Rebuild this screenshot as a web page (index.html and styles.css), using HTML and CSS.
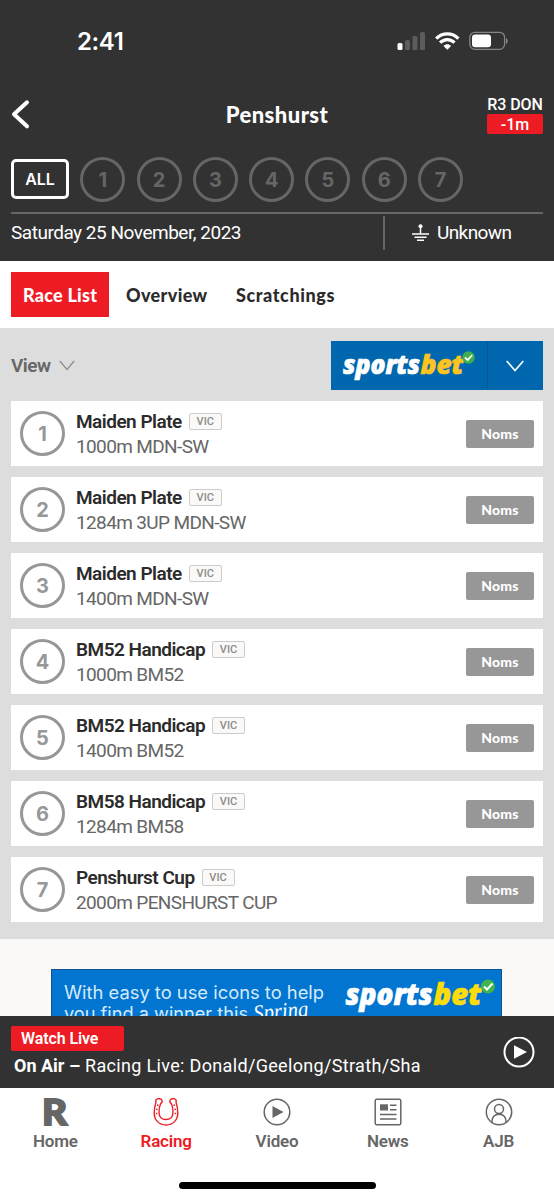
FILE: index.html
```
<!DOCTYPE html>
<html lang="en">
<head>
    <meta charset="UTF-8">
    <meta name="viewport" content="width=device-width, initial-scale=1.0">
    <title>Penshurst - Race List</title>
    <link rel="stylesheet" href="styles.css">
</head>
<body>

    <!-- Header Section -->
    <div class="header">
        <div class="status-bar">
            <span class="time">2:41</span>
            <svg class="status-icons" width="112" height="20" viewBox="0 0 112 20">
                <rect x="0.5" y="12" width="5" height="7" rx="1.5" fill="#fff"/>
                <rect x="8" y="9" width="5" height="10" rx="1.5" fill="#5c5c5c"/>
                <rect x="15.5" y="5" width="5" height="14" rx="1.5" fill="#5c5c5c"/>
                <rect x="23" y="1" width="5" height="18" rx="1.5" fill="#5c5c5c"/>
                <g fill="none" stroke="#fff" stroke-width="3.2">
                    <path d="M39.2 7.6C45.3 1.2 55.3 1.2 61.4 7.6"/>
                    <path d="M43.1 11.7C47.2 7.5 53.4 7.5 57.5 11.7"/>
                </g>
                <path d="M46.5 15C48.7 12.8 51.9 12.8 54.1 15L50.3 18.8Z" fill="#fff"/>
                <rect x="72.8" y="1.3" width="34.8" height="17" rx="5" fill="none" stroke="#858585" stroke-width="1.3"/>
                <rect x="75" y="3.5" width="19" height="12.8" rx="3.2" fill="#fff"/>
                <path d="M109 7c2.2 1 2.2 5 0 6z" fill="#858585"/>
            </svg>
        </div>

        <div class="title-bar">
            <svg class="back" width="20" height="32" viewBox="0 0 20 32">
                <path d="M16 3.3L3 15.3L16 27.3" fill="none" stroke="#fff" stroke-width="4" stroke-linecap="round" stroke-linejoin="round"/>
            </svg>
            <h1>Penshurst</h1>
            <div class="next-race">
                <span class="next-name">R3 DON</span>
                <span class="next-time">-1m</span>
            </div>
        </div>

        <div class="race-numbers">
            <span class="all">ALL</span>
            <span class="circle">1</span>
            <span class="circle">2</span>
            <span class="circle">3</span>
            <span class="circle">4</span>
            <span class="circle">5</span>
            <span class="circle">6</span>
            <span class="circle">7</span>
        </div>

        <div class="meeting-info">
            <span class="date">Saturday 25 November, 2023</span>
            <div class="track">
                <svg width="17" height="18" viewBox="0 0 17 18">
                    <circle cx="8.5" cy="2.2" r="2" fill="#fff"/>
                    <path d="M8.5 2v8M0 10h17M2.5 13.2h12M5 16.2h7" fill="none" stroke="#fff" stroke-width="1.5"/>
                </svg>
                <span>Unknown</span>
            </div>
        </div>
    </div>

    <!-- Tabs Section -->
    <div class="tabs">
        <span class="tab active">Race List</span>
        <span class="tab overview">Overview</span>
        <span class="tab">Scratchings</span>
    </div>

    <!-- Race List Section -->
    <div class="race-list">
        <div class="list-top">
            <div class="view">
                <span>View</span>
                <svg width="16" height="11" viewBox="0 0 16 11">
                    <path d="M0.8 1L8 9.5L15.2 1" fill="none" stroke="#8c8c8c" stroke-width="1.2"/>
                </svg>
            </div>
            <div class="bookie">
                <svg class="bookie-logo" width="156" height="49" viewBox="0 0 156 49">
                    <g class="logo-text" font-size="27">
                        <text x="12" y="33" textLength="77" lengthAdjust="spacingAndGlyphs" fill="#fff" stroke="#fff">sports</text>
                        <text x="89.500" y="33" textLength="43" lengthAdjust="spacingAndGlyphs" fill="#fdc41f" stroke="#fdc41f">bet</text>
                    </g>
                    <circle cx="137.5" cy="16.5" r="6.2" fill="#3fb04b"/>
                    <path d="M134 16.5l2.7 2.5 4.5-5" fill="none" stroke="#fff" stroke-width="1.8"/>
                </svg>
                <div class="bookie-arrow">
                    <svg width="18" height="12" viewBox="0 0 18 12">
                        <path d="M0.7 1L9 10.5L17.3 1" fill="none" stroke="#fff" stroke-width="1.6"/>
                    </svg>
                </div>
            </div>
        </div>

        <div class="race">
            <span class="circle">1</span>
            <div class="race-info">
                <h2>Maiden Plate <span class="state">VIC</span></h2>
                <p>1000m MDN-SW</p>
            </div>
            <span class="noms">Noms</span>
        </div>
        <div class="race">
            <span class="circle">2</span>
            <div class="race-info">
                <h2>Maiden Plate <span class="state">VIC</span></h2>
                <p>1284m 3UP MDN-SW</p>
            </div>
            <span class="noms">Noms</span>
        </div>
        <div class="race">
            <span class="circle">3</span>
            <div class="race-info">
                <h2>Maiden Plate <span class="state">VIC</span></h2>
                <p>1400m MDN-SW</p>
            </div>
            <span class="noms">Noms</span>
        </div>
        <div class="race">
            <span class="circle">4</span>
            <div class="race-info">
                <h2>BM52 Handicap <span class="state">VIC</span></h2>
                <p>1000m BM52</p>
            </div>
            <span class="noms">Noms</span>
        </div>
        <div class="race">
            <span class="circle">5</span>
            <div class="race-info">
                <h2>BM52 Handicap <span class="state">VIC</span></h2>
                <p>1400m BM52</p>
            </div>
            <span class="noms">Noms</span>
        </div>
        <div class="race">
            <span class="circle">6</span>
            <div class="race-info">
                <h2>BM58 Handicap <span class="state">VIC</span></h2>
                <p>1284m BM58</p>
            </div>
            <span class="noms">Noms</span>
        </div>
        <div class="race">
            <span class="circle">7</span>
            <div class="race-info">
                <h2>Penshurst Cup <span class="state">VIC</span></h2>
                <p>2000m PENSHURST CUP</p>
            </div>
            <span class="noms">Noms</span>
        </div>
    </div>

    <!-- Advert Section -->
    <div class="advert">
        <svg class="banner" width="451" height="47" viewBox="0 0 451 47">
            <g class="banner-text" font-size="18" fill="#d5eafa">
                <text x="13" y="30" textLength="260" lengthAdjust="spacingAndGlyphs">With easy to use icons to help</text>
                <text x="13" y="51" textLength="184" lengthAdjust="spacingAndGlyphs">you find a winner this</text>
            </g>
            <text class="script" transform="translate(203 52) rotate(-5)" font-size="23" textLength="55" lengthAdjust="spacingAndGlyphs" fill="#fff">Spring</text>
            <g class="logo-text" font-size="30">
                <text x="294.5" y="36" textLength="87" lengthAdjust="spacingAndGlyphs" fill="#fff" stroke="#fff">sports</text>
                <text x="382.5" y="36" textLength="48" lengthAdjust="spacingAndGlyphs" fill="#fddc0b" stroke="#fddc0b">bet</text>
            </g>
            <circle cx="437" cy="17.5" r="7" fill="#3fb54b"/>
            <path d="M433 17.5l3 3 5.5-6" fill="none" stroke="#fff" stroke-width="2"/>
            <path d="M0 .5H450.5V47M.5 0V47" fill="none" stroke="#10528c"/>
        </svg>
    </div>

    <!-- Live Player -->
    <div class="player">
        <div class="player-info">
            <span class="watch">Watch Live</span>
            <p><b>On Air –</b> Racing Live: Donald/Geelong/Strath/Sha</p>
        </div>
        <svg width="32" height="32" viewBox="0 0 32 32">
            <circle cx="16" cy="15" r="14.5" fill="none" stroke="#fff" stroke-width="2"/>
            <path d="M11 8.2L24 15L11 21.8Z" fill="#fff"/>
        </svg>
    </div>

    <!-- Bottom Navigation -->
    <div class="nav">
        <div class="nav-item">
            <svg class="brand-icon" width="28" height="28" viewBox="0 0 28 28">
                <text class="brand" x="1" y="26.5" font-size="36" textLength="25" lengthAdjust="spacingAndGlyphs" fill="#666" stroke="#666" stroke-width="1.8">R</text>
            </svg>
            <span>Home</span>
        </div>
        <div class="nav-item current">
            <svg width="28" height="28" viewBox="0 0 28 28" fill="none" stroke="#ed1c24">
                <path stroke-width="1.4" stroke-linejoin="round" d="M5.5 .8C8 .2 10.3 1.5 10.2 3.4C10.1 4.6 9.5 5 8.6 5.7C7.4 8 7 11 7 14.5C7 19 10 21.5 14 21.5S21 19 21 14.5C21 11 20.6 8 19.4 5.7C18.5 5 17.9 4.6 17.8 3.4C17.7 1.5 20 .2 22.5 .8C24.1 1.3 24.5 2.7 24 4.2C25 7 25.8 11 25.8 15C25.8 22 21 27 14 27S2.2 22 2.2 15C2.2 11 3 7 4 4.2C3.5 2.7 3.9 1.3 5.5 .8Z"/>
                <path stroke-width="1.5" stroke-dasharray="1.5 2.7" d="M6 6.5C4.6 11 4.1 14.5 5 18M22 6.5C23.4 11 23.9 14.5 23 18"/>
            </svg>
            <span>Racing</span>
        </div>
        <div class="nav-item">
            <svg width="28" height="28" viewBox="0 0 28 28">
                <circle cx="14" cy="14" r="12.8" fill="none" stroke="#666" stroke-width="1.5"/>
                <path d="M9.5 8L20.5 14L9.5 20Z" fill="#666"/>
            </svg>
            <span>Video</span>
        </div>
        <div class="nav-item">
            <svg width="28" height="28" viewBox="0 0 28 28">
                <rect x="1.2" y="1.2" width="25.6" height="25.6" rx="1.5" fill="none" stroke="#666" stroke-width="1.5"/>
                <rect x="6" y="6.3" width="8" height="6.2" fill="#666"/>
                <path d="M16 7.3h6.5M16 11.7h6.5M6 16.5h16.5M6 21h16.5" stroke="#666" stroke-width="1.5"/>
            </svg>
            <span>News</span>
        </div>
        <div class="nav-item">
            <svg width="28" height="28" viewBox="0 0 28 28" fill="none" stroke="#666" stroke-width="1.5">
                <circle cx="14" cy="14" r="12.7"/>
                <circle cx="14" cy="11" r="4.5"/>
                <path d="M6.8 24.2C7 19 10 16.2 14 16.2S21 19 21.2 24.2"/>
            </svg>
            <span>AJB</span>
        </div>
    </div>
    <div class="home-bar"></div>

</body>
</html>
```
FILE: styles.css
```
/* Basic reset and styling */
* {
    margin: 0;
    padding: 0;
    box-sizing: border-box;
}

body {
    width: 554px;
    height: 1200px;
    overflow: hidden;
    font-family: Roboto, Arial, sans-serif;
    background-color: #fff;
    color: #2b2b2b;
}

svg {
    display: block;
    flex: none;
}

.header {
    background-color: #323232;
    height: 261px;
    padding: 0 11px;
    color: #fff;
}

.status-bar {
    display: flex;
    justify-content: space-between;
    align-items: center;
    height: 82px;
    padding: 0 34px 0 66px;
}

.time {
    font-family: Inter, sans-serif;
    font-size: 24px;
    font-weight: 600;
    letter-spacing: -0.4px;
}

.title-bar {
    display: grid;
    grid-template-columns: 56px 1fr 56px;
    align-items: center;
    height: 66px;
}

.title-bar h1 {
    padding-bottom: 2px;
    font-family: Lato, sans-serif;
    font-size: 22px;
    font-weight: 900;
    letter-spacing: 0.45px;
    text-align: center;
}

.next-race {
    display: flex;
    flex-direction: column;
    line-height: 18px;
    text-align: center;
}

.next-name {
    font-size: 16px;
    font-weight: 500;
    white-space: nowrap;
    letter-spacing: -0.1px;
}

.next-time {
    height: 20px;
    line-height: 21px;
    border-radius: 2px;
    background-color: #ed1c24;
    font-size: 16px;
    font-weight: 500;
}

.race-numbers {
    display: flex;
    align-items: center;
    gap: 11.3px;
    height: 62px;
}

.all {
    width: 58px;
    height: 40px;
    border: 3px solid #fff;
    border-radius: 5px;
    font-family: Inter, sans-serif;
    font-size: 16px;
    font-weight: 600;
    line-height: 34px;
    text-align: center;
}

.circle {
    width: 45px;
    height: 45px;
    flex: none;
    border: 3px solid #666;
    border-radius: 50%;
    color: #666;
    font-family: Inter, sans-serif;
    font-size: 20px;
    font-weight: 700;
    line-height: 40px;
    text-align: center;
}

.meeting-info {
    display: flex;
    justify-content: space-between;
    height: 38px;
    margin-top: 2px;
    border-top: 2px solid #666;
    font-size: 19px;
    line-height: 38px;
    letter-spacing: -0.48px;
}

.track {
    display: flex;
    align-items: center;
    gap: 8px;
    width: 160px;
    height: 34px;
    margin-top: 2px;
    padding-left: 27px;
    border-left: 2px solid #666;
    letter-spacing: -0.6px;
}

.tabs {
    display: flex;
    align-items: center;
    height: 67px;
    padding: 0 11px;
    font-family: Lato, sans-serif;
    font-size: 18px;
    font-weight: 900;
}

.tab {
    padding: 0 12px;
    line-height: 46px;
    letter-spacing: 0.6px;
}

.tab.active {
    width: 98px;
    height: 45px;
    background-color: #ed1c24;
    color: #fff;
    letter-spacing: 0.25px;
    white-space: nowrap;
}

.overview {
    width: 115px;
    padding-left: 17px;
    letter-spacing: 0.35px;
}

.race-list {
    display: flex;
    flex-direction: column;
    gap: 11px;
    height: 611px;
    padding: 13px 11px 0;
    background-color: #ddd;
}

.list-top {
    display: flex;
    justify-content: space-between;
    align-items: center;
    height: 49px;
}

.view {
    display: flex;
    align-items: center;
    gap: 8px;
    color: #666;
    font-size: 19px;
    font-weight: 600;
    letter-spacing: -0.5px;
}

.bookie {
    display: flex;
    width: 212px;
    height: 49px;
    background-color: #0067ae;
}

.bookie-arrow {
    flex: 1;
    display: flex;
    align-items: center;
    justify-content: center;
    padding-right: 2px;
    border-left: 1px solid #0a568e;
}

.logo-text {
    font-family: "Open Sans", sans-serif;
    font-weight: 800;
    font-style: italic;
    stroke-width: 0.7px;
}

.race {
    display: flex;
    align-items: center;
    height: 65px;
    padding: 0 9px;
    background-color: #fff;
}

.race .circle {
    border-color: #979797;
    color: #979797;
    line-height: 41px;
}

.race-info {
    flex: 1;
    padding-left: 11px;
}

.race-info h2 {
    display: flex;
    align-items: center;
    gap: 7px;
    height: 25px;
    font-size: 19px;
    font-weight: 600;
    letter-spacing: -0.52px;
}

.race-info p {
    font-size: 19px;
    line-height: 25px;
    letter-spacing: -0.63px;
    color: #666;
}

.state {
    width: 33px;
    height: 17px;
    border: 1px solid #ccc;
    border-radius: 2px;
    background-color: #faf9f7;
    color: #8c8c8c;
    font-size: 11px;
    font-weight: 500;
    line-height: 16px;
    letter-spacing: 0;
    text-align: center;
}

.noms {
    width: 68px;
    height: 28px;
    border-radius: 2px;
    background-color: #979797;
    color: #fff;
    font-family: Lato, sans-serif;
    font-size: 14px;
    font-weight: 900;
    line-height: 28px;
    letter-spacing: 0.2px;
    text-align: center;
}

.advert {
    height: 77px;
    padding: 30px 51px 0;
    background-color: #faf9f7;
}

.banner {
    background-color: #0275d0;
}

.banner-text {
    font-family: Inter, sans-serif;
}

.script {
    font-family: "Liberation Serif", cursive;
    font-style: italic;
}

.player {
    display: flex;
    align-items: center;
    justify-content: space-between;
    height: 72px;
    padding: 2px 19px 0 11px;
    background-color: #323232;
    color: #fff;
}

.watch {
    display: block;
    width: 113px;
    height: 25px;
    padding-left: 10px;
    border-radius: 2px;
    background-color: #ed1c24;
    font-size: 16px;
    font-weight: 600;
    line-height: 25px;
    letter-spacing: -0.1px;
}

.player p {
    padding-left: 3px;
    font-size: 18px;
    line-height: 29px;
    letter-spacing: 0.33px;
    white-space: nowrap;
}

.player b {
    font-weight: 700;
    letter-spacing: 0;
}

.nav {
    display: grid;
    grid-template-columns: repeat(5, 1fr);
    height: 94px;
    padding-top: 10px;
}

.nav-item {
    display: flex;
    flex-direction: column;
    align-items: center;
    gap: 3px;
    color: #666;
    font-size: 17px;
    font-weight: 600;
    line-height: 24px;
    letter-spacing: -0.2px;
}

.nav-item.current {
    color: #ed1c24;
}

.brand-icon {
    overflow: visible;
}

.brand {
    font-family: Lato, sans-serif;
    font-weight: 900;
}

.home-bar {
    width: 197px;
    height: 7px;
    margin: 0 auto;
    border-radius: 4px;
    background-color: #000;
}
```
